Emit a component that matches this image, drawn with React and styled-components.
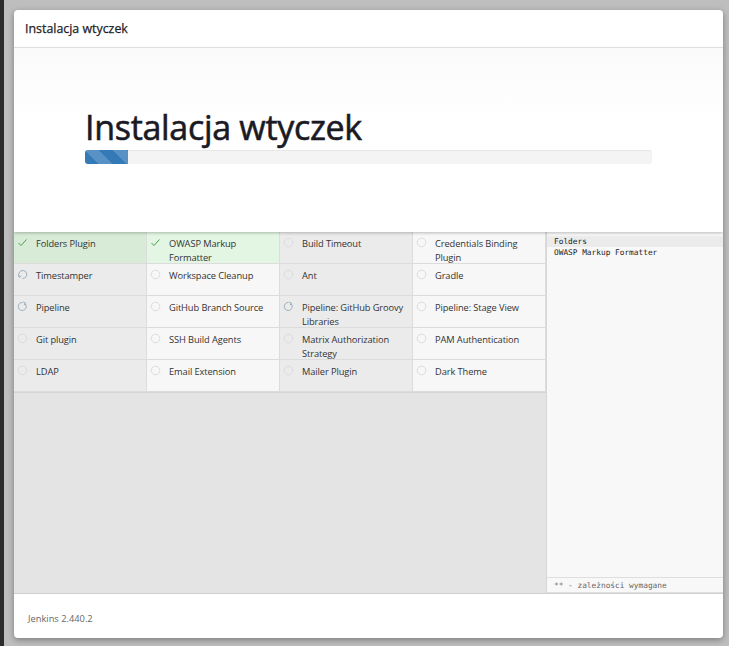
import React from "react";
import styled, { createGlobalStyle } from "styled-components";

const plugins = [
  { name: "Folders Plugin", state: "success" },
  { name: "OWASP Markup Formatter", state: "success" },
  { name: "Build Timeout", state: "idle" },
  { name: "Credentials Binding Plugin", state: "idle" },
  { name: "Timestamper", state: "installing" },
  { name: "Workspace Cleanup", state: "idle" },
  { name: "Ant", state: "idle" },
  { name: "Gradle", state: "idle" },
  { name: "Pipeline", state: "pending" },
  { name: "GitHub Branch Source", state: "idle" },
  { name: "Pipeline: GitHub Groovy Libraries", state: "pending" },
  { name: "Pipeline: Stage View", state: "idle" },
  { name: "Git plugin", state: "idle" },
  { name: "SSH Build Agents", state: "idle" },
  { name: "Matrix Authorization Strategy", state: "idle" },
  { name: "PAM Authentication", state: "idle" },
  { name: "LDAP", state: "idle" },
  { name: "Email Extension", state: "idle" },
  { name: "Mailer Plugin", state: "idle" },
  { name: "Dark Theme", state: "idle" },
];

const logLines = ["Folders", "OWASP Markup Formatter"];

const GlobalStyle = createGlobalStyle`
  html, body {
    margin: 0;
    padding: 0;
  }
  body {
    background: #bebebe;
    font-family: "Open Sans", "Noto Sans", sans-serif;
  }
`;

const Page = styled.div`
  width: 729px;
  height: 646px;
  box-sizing: border-box;
  border-left: 4px solid #2c2c2c;
  padding: 10px 6px 8px 10px;
`;

const Modal = styled.div`
  width: 709px;
  height: 628px;
  background: #fff;
  border-radius: 4px;
  box-shadow: 0 2px 6px rgba(0, 0, 0, 0.35);
  display: flex;
  flex-direction: column;
  overflow: hidden;
`;

const Header = styled.div`
  height: 38px;
  flex-shrink: 0;
  box-sizing: border-box;
  border-bottom: 1px solid #e8e8e8;
  display: flex;
  align-items: center;
  padding-left: 11px;
  font-size: 12.4px;
  color: #1d1d26;
  -webkit-text-stroke: 0.25px #1d1d26;
`;

const Intro = styled.div`
  height: 184px;
  flex-shrink: 0;
  box-sizing: border-box;
  padding: 56px 71px 0;
  background: linear-gradient(#fafafa, #fff 40%);
  position: relative;
  z-index: 1;
  box-shadow: 0 1px 3px rgba(0, 0, 0, 0.25);
`;

const BigTitle = styled.h1`
  margin: 0;
  font-size: 34px;
  font-weight: 400;
  line-height: 46px;
  color: #1a1a24;
  letter-spacing: -0.3px;
  -webkit-text-stroke: 0.6px #1a1a24;
`;

const Progress = styled.div`
  height: 14px;
  background: #f4f4f4;
  border-radius: 3px;
  box-shadow: inset 0 1px 1px rgba(0, 0, 0, 0.06);
  overflow: hidden;
`;

const ProgressFill = styled.div`
  height: 100%;
  background-color: #337ab7;
  background-image: linear-gradient(
    45deg,
    rgba(255, 255, 255, 0.18) 25%,
    transparent 25%,
    transparent 50%,
    rgba(255, 255, 255, 0.18) 50%,
    rgba(255, 255, 255, 0.18) 75%,
    transparent 75%,
    transparent
  );
  background-size: 28px 28px;
`;

const Main = styled.div`
  flex: 1;
  display: flex;
  min-height: 0;
`;

const GridPane = styled.div`
  width: 532px;
  background: #e4e4e4;
  align-self: stretch;
`;

const Grid = styled.div`
  display: grid;
  grid-template-columns: repeat(4, 133px);
  border-bottom: 1px solid #d4d4d4;
`;

const cellBg = {
  success: ["#d7ebd7", "#e3f6e3"],
  other: ["#ebebeb", "#f7f7f7"],
};

const Cell = styled.div`
  height: 32px;
  box-sizing: border-box;
  padding: 5px 6px 0 22px;
  position: relative;
  font-size: 9.3px;
  letter-spacing: -0.1px;
  line-height: 14px;
  color: #333;
  background: ${(p) =>
    (p.$state === "success" ? cellBg.success : cellBg.other)[p.$col % 2]};
  border-right: 1px solid #dcdcdc;
  border-bottom: 1px solid #dcdcdc;
`;

const IconBox = styled.span`
  position: absolute;
  left: 3px;
  top: 5px;
  width: 11px;
  height: 11px;
  display: flex;
`;

const LogPane = styled.div`
  flex: 1;
  background: #f8f8f8;
  border-left: 1px solid #d6d6d6;
  display: flex;
  flex-direction: column;
  padding-top: 4px;
`;

const LogBody = styled.div`
  flex: 1;
`;

const LogLine = styled.div`
  font-family: "DejaVu Sans Mono", "Liberation Mono", monospace;
  font-size: 7.8px;
  line-height: 11px;
  padding-left: 7px;
  color: #222;
  background: ${(p) => (p.$active ? "#ebebeb" : "transparent")};
`;

const LogFooter = styled.div`
  height: 16px;
  box-sizing: border-box;
  border-top: 1px solid #dedede;
  border-bottom: 1px solid #dedede;
  font-family: "DejaVu Sans Mono", "Liberation Mono", monospace;
  font-size: 7.8px;
  line-height: 14px;
  padding: 1px 0 0 7px;
  color: #666;
`;

const Footer = styled.div`
  height: 45px;
  flex-shrink: 0;
  box-sizing: border-box;
  border-top: 1px solid #d0d0d0;
  display: flex;
  align-items: center;
  padding: 4px 0 0 14px;
  font-size: 9.3px;
  color: #666;
`;

const StatusIcon = ({ state }) => {
  if (state === "success") {
    return (
      <svg width="11" height="11" viewBox="0 0 11 11">
        <path d="M1.5 6 L4 8.5 L9.5 2.5" fill="none" stroke="#4a9d4a" strokeWidth="1" />
      </svg>
    );
  }
  if (state === "installing") {
    return (
      <svg width="11" height="11" viewBox="0 0 11 11">
        <path d="M2.3 7.5 A4 4 0 1 1 5.5 9.5" fill="none" stroke="#9aaebd" strokeWidth="1" />
        <path d="M1.2 6.2 L2.4 8.4 L4.3 6.9" fill="none" stroke="#9aaebd" strokeWidth="1" />
      </svg>
    );
  }
  if (state === "pending") {
    return (
      <svg width="11" height="11" viewBox="0 0 11 11">
        <path d="M8 2.6 A4 4 0 1 1 5.5 1.5" fill="none" stroke="#9aaebd" strokeWidth="1" />
        <path d="M6.2 0.8 L8.4 2 L7.2 4.2" fill="none" stroke="#9aaebd" strokeWidth="1" />
      </svg>
    );
  }
  return (
    <svg width="11" height="11" viewBox="0 0 11 11">
      <circle cx="5.5" cy="5.5" r="4.3" fill="none" stroke="#dcdcdc" strokeWidth="1" />
    </svg>
  );
};

const App = () => {
  return (
    <>
      <GlobalStyle />
      <Page>
        <Modal>
          <Header>Instalacja wtyczek</Header>
          <Intro>
            <BigTitle>Instalacja wtyczek</BigTitle>
            <Progress>
              <ProgressFill style={{ width: "7.6%" }} />
            </Progress>
          </Intro>
          <Main>
            <GridPane>
              <Grid>
                {plugins.map((p, i) => (
                  <Cell key={p.name} $state={p.state} $col={i % 4}>
                    <IconBox>
                      <StatusIcon state={p.state} />
                    </IconBox>
                    {p.name}
                  </Cell>
                ))}
              </Grid>
            </GridPane>
            <LogPane>
              <LogBody>
                {logLines.map((l, i) => (
                  <LogLine key={l} $active={i === 0}>
                    {l}
                  </LogLine>
                ))}
              </LogBody>
              <LogFooter>** - zależności wymagane</LogFooter>
            </LogPane>
          </Main>
          <Footer>Jenkins 2.440.2</Footer>
        </Modal>
      </Page>
    </>
  );
};

export default App;
